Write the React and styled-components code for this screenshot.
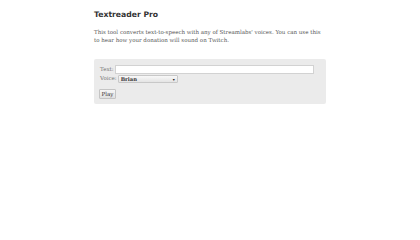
import React from "react";
import styled, { createGlobalStyle } from "styled-components";

const Global = createGlobalStyle`
  html, body { margin: 0; padding: 0; background: #fff; }
  body { font-family: "DejaVu Serif", serif; color: #333; }
`;

const Container = styled.div`
  width: 232px;
  margin: 0 auto;
  padding-top: 10px;
`;

const Title = styled.h1`
  margin: 0;
  font-family: "DejaVu Sans", sans-serif;
  font-weight: bold;
  font-size: 7.7px;
  line-height: 10px;
  color: #333;
`;

const Intro = styled.p`
  margin: 8px 0 0;
  font-size: 5.5px;
  line-height: 8px;
  color: #555;
`;

const Panel = styled.div`
  margin-top: 15px;
  background: #ebebeb;
  border-radius: 2px;
  padding: 6px 12px 5px 6px;
  font-size: 5.5px;
  color: #777;
`;

const Row = styled.div`
  display: flex;
  align-items: center;
  gap: 1px;
  height: ${(p) => p.$h}px;
  margin-bottom: ${(p) => p.$gap || 0}px;
`;

const Label = styled.label`
  font-size: 5.5px;
  line-height: 1;
`;

const TextInput = styled.input`
  flex: 1;
  height: 9px;
  box-sizing: border-box;
  border: 1px solid #d2d2d2;
  background: #fff;
  padding: 0;
  margin: 0;
`;

const Select = styled.div`
  width: 60px;
  height: 8px;
  box-sizing: border-box;
  border: 1px solid #c8c8c8;
  border-radius: 1px;
  background: linear-gradient(#f8f8f8, #e4e4e4);
  font-family: "DejaVu Serif", serif;
  font-size: 5.2px;
  font-weight: bold;
  color: #333;
  display: flex;
  align-items: center;
  justify-content: space-between;
  padding: 0 2px;
`;

const Caret = styled.span`
  font-size: 4px;
  color: #222;
`;

const Button = styled.button`
  display: block;
  margin-top: 6px;
  margin-left: -1px;
  width: 17px;
  height: 10px;
  padding: 0;
  border: 1px solid #c4c4c4;
  border-radius: 1px;
  background: linear-gradient(#f6f6f6, #e0e0e0);
  font-family: "DejaVu Serif", serif;
  font-size: 5.5px;
  color: #333;
`;

export default function App() {
  return (
    <>
      <Global />
      <Container>
        <Title>Textreader Pro</Title>
        <Intro>
          This tool converts text-to-speech with any of Streamlabs' voices. You
          can use this to hear how your donation will sound on Twitch.
        </Intro>
        <Panel>
          <Row $h={9} $gap={1}>
            <Label>Text:</Label>
            <TextInput type="text" />
          </Row>
          <Row $h={8}>
            <Label>Voice:</Label>
            <Select>
              <span>Brian</span>
              <Caret>▾</Caret>
            </Select>
          </Row>
          <Button>Play</Button>
        </Panel>
      </Container>
    </>
  );
}
